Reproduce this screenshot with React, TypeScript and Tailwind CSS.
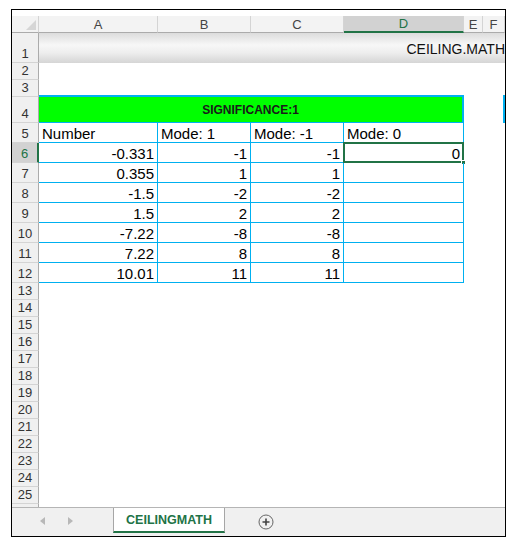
const COLS = "grid grid-cols-[27px_119px_93px_93px_120px_19px_22px]";

const data = [
  ["-0.331", "-1", "-1", "0"],
  ["0.355", "1", "1", ""],
  ["-1.5", "-2", "-2", ""],
  ["1.5", "2", "2", ""],
  ["-7.22", "-8", "-8", ""],
  ["7.22", "8", "8", ""],
  ["10.01", "11", "11", ""],
];

function RowHead({ n, sel }: { n: number; sel?: boolean }) {
  return (
    <div
      className={`flex items-end justify-center border-b border-b-[#d4d4d4] pb-[1px] text-[13px] leading-[15px] ${
        sel
          ? "border-r-2 border-r-[#217346] bg-[#d2d2d2] text-[#217346]"
          : "border-r border-r-[#ababab] bg-[#f0f0f0] text-[#333]"
      }`}
    >
      {n}
    </div>
  );
}

function ColHead({ label, sel }: { label: string; sel?: boolean }) {
  return (
    <div
      className={`flex items-center justify-center border-r border-r-[#d4d4d4] text-[13px] leading-[15px] ${
        sel
          ? "border-b-2 border-b-[#217346] bg-[#d2d2d2] text-[#217346]"
          : "border-b border-b-[#ababab] bg-[#f3f3f3] text-[#444]"
      }`}
    >
      {label}
    </div>
  );
}

export default function App() {
  return (
    <div className="ml-[11px] mt-[9px] flex h-[528px] w-[495px] flex-col border border-black bg-white font-['Liberation_Sans',Arial,sans-serif] text-black">
      <div className="h-[497px] overflow-hidden pt-[6px]">
        {/* column headers */}
        <div className={`${COLS} h-[17px]`}>
          <div className="relative border-r border-b border-r-[#d4d4d4] border-b-[#ababab] bg-[#f3f3f3]">
            <svg className="absolute bottom-[2px] right-[2px]" width="10" height="10">
              <polygon points="10,0 10,10 0,10" fill="#d6d6d6" />
            </svg>
          </div>
          <ColHead label="A" />
          <ColHead label="B" />
          <ColHead label="C" />
          <ColHead label="D" sel />
          <ColHead label="E" />
          <ColHead label="F" />
        </div>

        {/* row 1 */}
        <div className={`${COLS} h-[30px]`}>
          <RowHead n={1} />
          <div className="col-span-6 flex items-center justify-end bg-[linear-gradient(to_bottom,#dcdcdc,#f7f7f7_40%,#eeeeee_65%,#d5d5d5)] pt-[1px] text-[14px] leading-[16px] text-[#111]">
            CEILING.MATH
          </div>
        </div>

        {/* row 2 */}
        <div className={`${COLS} h-[17px]`}>
          <RowHead n={2} />
        </div>

        {/* row 3 */}
        <div className={`${COLS} h-[17px]`}>
          <RowHead n={3} />
          <div className="col-span-4 border-b-2 border-[#00b0f0]" />
          <div />
          <div className="mt-[15px] border-r-2 border-[#00b0f0]" />
        </div>

        {/* row 4 */}
        <div className={`${COLS} h-[26px]`}>
          <RowHead n={4} />
          <div className="col-span-4 flex items-center justify-center border-r-2 border-b border-[#00b0f0] bg-[#00ff00] pt-[1px] text-[12px] font-bold leading-[14px] text-[#1a1a1a]">
            SIGNIFICANCE:1
          </div>
          <div />
          <div className="border-r-2 border-[#00b0f0]" />
        </div>

        {/* row 5 */}
        <div className={`${COLS} h-[20px]`}>
          <RowHead n={5} />
          {["Number", "Mode: 1", "Mode: -1", "Mode: 0"].map((t) => (
            <div
              key={t}
              className="flex items-end border-r border-b border-[#00b0f0] pl-[3px] text-[15px] leading-[17px]"
            >
              {t}
            </div>
          ))}
        </div>

        {/* rows 6-12 */}
        {data.map((row, i) => (
          <div key={i} className={`${COLS} h-[20px]`}>
            <RowHead n={i + 6} sel={i === 0} />
            {row.map((v, j) => (
              <div
                key={j}
                className="relative flex items-end justify-end border-r border-b border-[#00b0f0] pr-[3px] text-[15px] leading-[17px]"
              >
                {v}
                {i === 0 && j === 3 && (
                  <>
                    <div className="absolute -top-[1px] -left-[1px] -right-[1px] -bottom-[1px] border-2 border-[#217346]" />
                    <div className="absolute -bottom-[3px] -right-[3px] h-[5px] w-[5px] border border-white bg-[#217346]" />
                  </>
                )}
              </div>
            ))}
          </div>
        ))}

        {/* rows 13-26 */}
        {Array.from({ length: 14 }, (_, i) => (
          <div key={i} className={`${COLS} h-[17px]`}>
            <RowHead n={i + 13} />
          </div>
        ))}
      </div>

      {/* sheet tabs */}
      <div className="flex h-[29px] items-start border-t border-[#b5b5b5] bg-[#f0f0f0]">
        <div className="flex h-[25px] w-[101px] items-center pl-[27px]">
          <svg width="5" height="8" className="ml-[1px]">
            <polygon points="5,0 5,8 0,4" fill="#b8b8b8" />
          </svg>
          <svg width="5" height="8" className="ml-[23px]">
            <polygon points="0,0 0,8 5,4" fill="#b8b8b8" />
          </svg>
        </div>
        <div className="flex h-[25px] w-[112px] items-center justify-center border-x border-[#a6a6a6] border-b-2 border-b-[#217346] bg-white pt-[1px] text-[12.5px] font-bold leading-[14px] text-[#217346]">
          CEILINGMATH
        </div>
        <div className="ml-[33px] flex h-[27px] items-center">
          <svg width="16" height="16" viewBox="0 0 16 16">
            <circle cx="8" cy="8" r="7" fill="none" stroke="#666" strokeWidth="1" />
            <path d="M8 4.5v7M4.5 8h7" stroke="#444" strokeWidth="1.6" />
          </svg>
        </div>
      </div>
    </div>
  );
}
